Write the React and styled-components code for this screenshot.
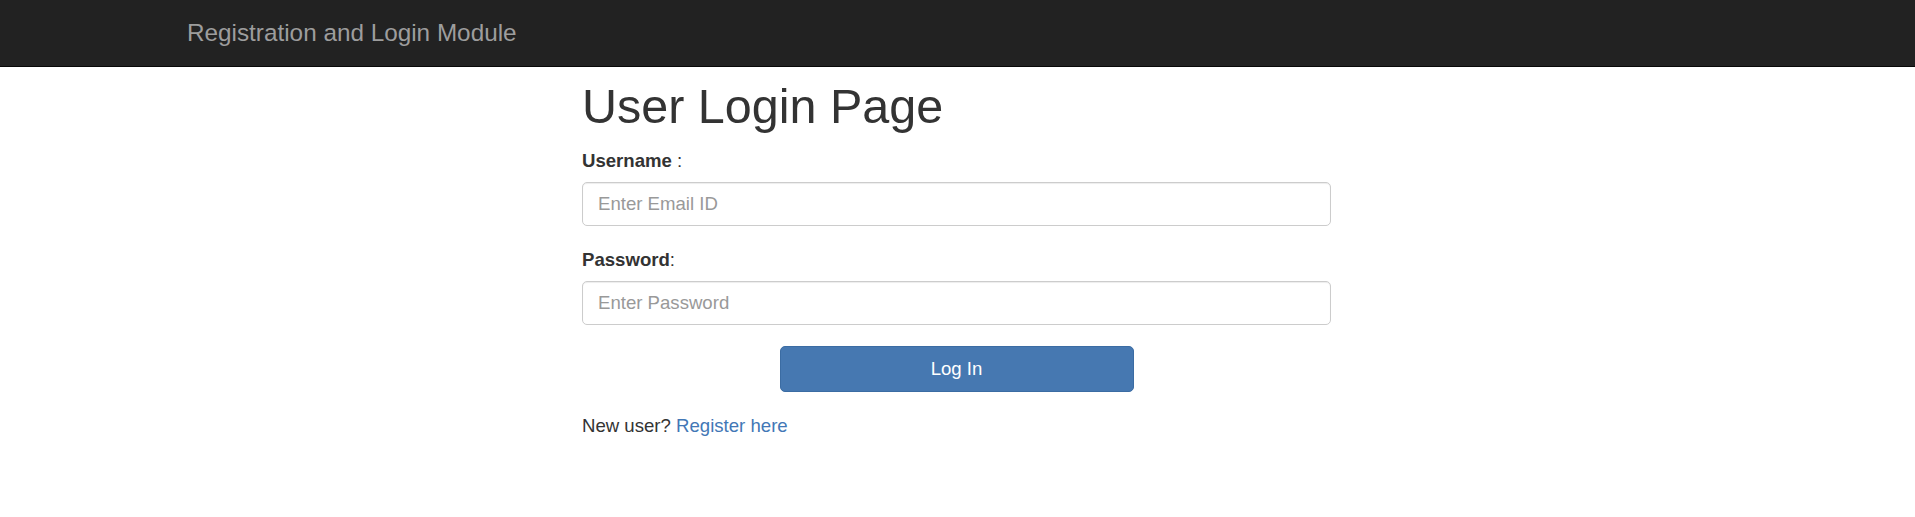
import styled, { createGlobalStyle } from 'styled-components';

const GlobalStyle = createGlobalStyle`
    html, body {
        margin: 0;
        padding: 0;
        background: #ffffff;
        font-family: "Liberation Sans", Arial, Helvetica, sans-serif;
        font-size: 18.6px;
        line-height: 25px;
        color: #333333;
    }

    * {
        box-sizing: border-box;
    }
`;

const App = () => {
    return (
        <>
            <GlobalStyle />
            <Navbar>
                <Brand href="#">Registration and Login Module</Brand>
            </Navbar>
            <Main>
                <Title>User Login Page</Title>
                <form onSubmit={(e) => e.preventDefault()}>
                    <FormGroup>
                        <Label htmlFor="username"><b>Username</b> :</Label>
                        <Input id="username" type="email" placeholder="Enter Email ID" />
                    </FormGroup>
                    <FormGroup>
                        <Label htmlFor="password"><b>Password</b>:</Label>
                        <Input id="password" type="password" placeholder="Enter Password" />
                    </FormGroup>
                    <ButtonRow>
                        <SubmitButton type="submit">Log In</SubmitButton>
                    </ButtonRow>
                </form>
                <Footer>
                    New user? <Link href="#">Register here</Link>
                </Footer>
            </Main>
        </>
    );
};

export default App;

const Navbar = styled.nav`
    display: flex;
    align-items: center;
    height: 67px;
    padding: 0 0 2px 187px;
    background-color: #222222;
    border-bottom: 1px solid #080808;
`;

const Brand = styled.a`
    font-size: 24.3px;
    line-height: 25px;
    color: #9d9d9d;
    text-decoration: none;
`;

const Main = styled.main`
    width: 751px;
    margin: 0 auto;
    padding-right: 2px;
`;

const Title = styled.h1`
    margin: 13px 0 16px;
    font-size: 48.5px;
    font-weight: 400;
    line-height: 52px;
    color: #333333;
`;

const FormGroup = styled.div`
    display: flex;
    flex-direction: column;
    margin-bottom: 21px;
`;

const Label = styled.label`
    margin-bottom: 9px;
    color: #333333;

    & b {
        font-weight: 700;
    }
`;

const Input = styled.input`
    display: block;
    width: 100%;
    height: 44px;
    padding: 0 15px;
    font-family: inherit;
    font-size: 18.6px;
    color: #555555;
    background-color: #ffffff;
    border: 1px solid #cccccc;
    border-radius: 5px;
    box-shadow: inset 0 1px 1px rgba(0, 0, 0, 0.075);
    outline: none;

    &::placeholder {
        color: #999999;
    }
`;

const ButtonRow = styled.div`
    display: flex;
    justify-content: center;
    margin-top: 1px;
`;

const SubmitButton = styled.button`
    width: 354px;
    height: 46px;
    font-family: inherit;
    font-size: 18.6px;
    color: #ffffff;
    background-color: #4678b1;
    border: 1px solid #3b6ca3;
    border-radius: 5px;
    cursor: pointer;

    &:hover {
        background-color: #3a6aa0;
    }
`;

const Footer = styled.p`
    margin: 21px 0 0;
    color: #333333;
`;

const Link = styled.a`
    color: #4277b6;
    text-decoration: none;
`;
